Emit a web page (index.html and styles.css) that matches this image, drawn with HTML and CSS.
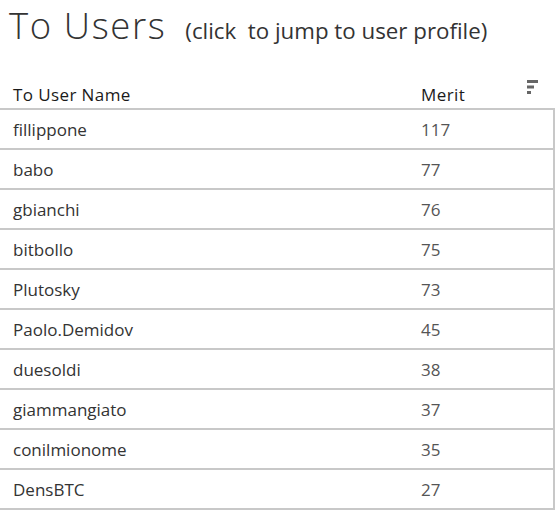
FILE: index.html
```html
<!DOCTYPE html>
<html>
<head>
<meta charset="utf-8">
<link rel="stylesheet" href="styles.css">
</head>
<body>
<div class="page">
  <div class="title-row">
    <span class="title">To Users</span>
    <span class="subtitle">(click&nbsp; to jump to user profile)</span>
  </div>
  <div class="table">
    <div class="head">
      <span class="c-name">To User Name</span>
      <span class="c-merit">Merit</span>
      <svg class="sort" width="12" height="14" viewBox="0 0 12 14">
        <rect x="0" y="0" width="11" height="3" fill="#666"/>
        <rect x="0" y="5.5" width="7" height="3" fill="#666"/>
        <rect x="0" y="11" width="4" height="3" fill="#666"/>
      </svg>
    </div>
    <div class="row"><span class="c-name">fillippone</span><span class="c-merit num">117</span></div>
    <div class="row"><span class="c-name">babo</span><span class="c-merit num">77</span></div>
    <div class="row"><span class="c-name">gbianchi</span><span class="c-merit num">76</span></div>
    <div class="row"><span class="c-name">bitbollo</span><span class="c-merit num">75</span></div>
    <div class="row"><span class="c-name">Plutosky</span><span class="c-merit num">73</span></div>
    <div class="row"><span class="c-name">Paolo.Demidov</span><span class="c-merit num">45</span></div>
    <div class="row"><span class="c-name">duesoldi</span><span class="c-merit num">38</span></div>
    <div class="row"><span class="c-name">giammangiato</span><span class="c-merit num">37</span></div>
    <div class="row"><span class="c-name">conilmionome</span><span class="c-merit num">35</span></div>
    <div class="row"><span class="c-name">DensBTC</span><span class="c-merit num">27</span></div>
  </div>
</div>
</body>
</html>
```
FILE: styles.css
```css
html, body { margin: 0; padding: 0; background: #fff; }
body { font-family: "Open Sans", "Noto Sans", sans-serif; color: #333; }
.page { width: 556px; height: 514px; overflow: hidden; }
.title-row { display: flex; align-items: baseline; padding-left: 9px; height: 58px; }
.title { font-size: 36.5px; font-weight: 300; color: #333; line-height: 50px; letter-spacing: 1.6px; }
.subtitle { font-size: 22.3px; color: #333; margin-left: 19px; }
.table { width: 555px; }
.head { position: relative; display: flex; align-items: flex-end; height: 52px; border-bottom: 2px solid #c8c8c8; box-sizing: border-box; padding-bottom: 3px; }
.head .c-name, .head .c-merit { color: #1a1a1a; font-weight: 500; line-height: 20px; letter-spacing: 0.4px; }
.sort { position: absolute; left: 527px; top: 22px; }
.row { display: flex; align-items: center; height: 40px; border-bottom: 2px solid #c8c8c8; border-right: 2px solid #c8c8c8; box-sizing: border-box; }
.c-name { width: 408px; padding-left: 13px; font-size: 17px; }
.c-merit { font-size: 17px; }
.num { color: #555; }
```
